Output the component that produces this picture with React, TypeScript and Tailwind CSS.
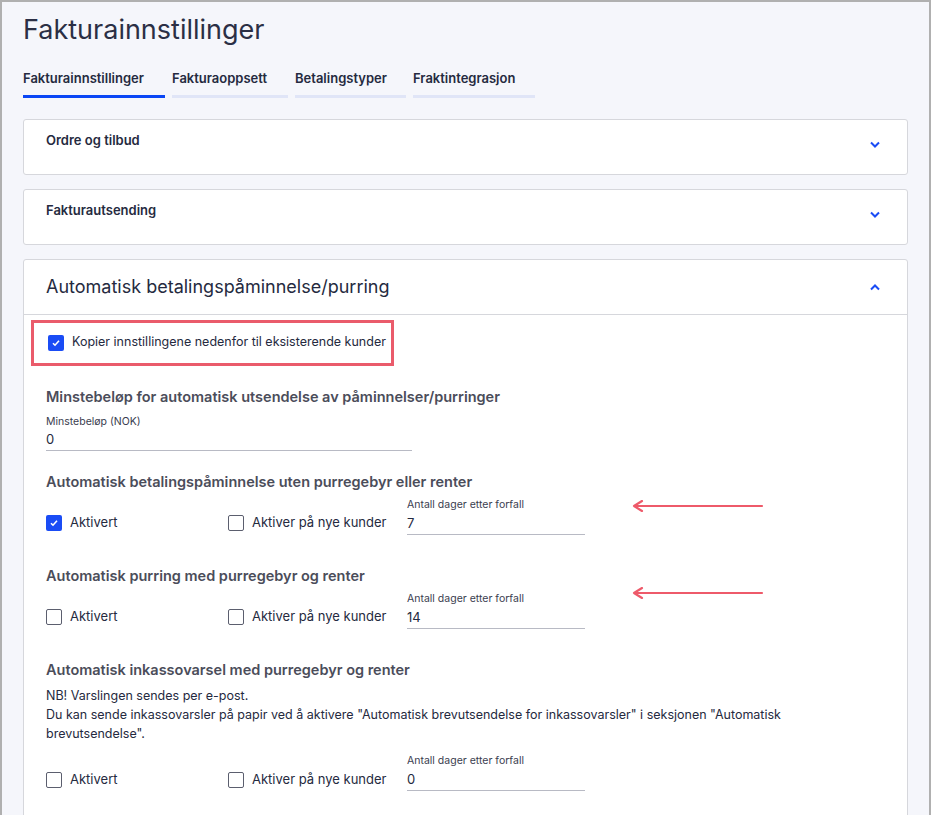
import React from "react";

const Check = ({ on }: { on?: boolean }) =>
  on ? (
    <span className="w-4 h-4 rounded-[2px] bg-[#1a4cf5] flex items-center justify-center shrink-0">
      <svg width="10" height="10" viewBox="0 0 10 10"><path d="M2 5.2l2 2 4-4.4" stroke="#fff" strokeWidth="1.6" fill="none" /></svg>
    </span>
  ) : (
    <span className="w-4 h-4 rounded-[2px] border border-[#5b5e6e] bg-white shrink-0" />
  );

const Chevron = ({ up }: { up?: boolean }) => (
  <svg width="12" height="8" viewBox="0 0 12 8" className="shrink-0">
    <path d={up ? "M2 6.5l4-4 4 4" : "M2 1.5l4 4 4-4"} stroke="#1a4cf5" strokeWidth="2" fill="none" />
  </svg>
);

const Row = ({ first, value }: { first?: boolean; value: string }) => (
  <div className="flex items-end h-[36px]">
    <div className="w-[182px] flex items-center gap-2 pb-[2px]"><Check on={first} /><span className="text-[13px]">Aktivert</span></div>
    <div className="w-[179px] flex items-center gap-2 pb-[2px]"><Check /><span className="text-[13px]">Aktiver på nye kunder</span></div>
    <div className="w-[178px]">
      <div className="text-[10.5px] text-[#3a3d4f] leading-[14px]">Antall dager etter forfall</div>
      <div className="text-[13px] border-b border-[#b8bac4] pb-[2px] pt-[2px] leading-[18px]">{value}</div>
    </div>
  </div>
);

const Arrow = ({ top }: { top: number }) => (
  <svg className="absolute" style={{ left: 630, top }} width="132" height="12" viewBox="0 0 132 12">
    <path d="M2 6h128M2 6l8-5M2 6l8 5" stroke="#ee5a6a" strokeWidth="2.2" fill="none" strokeLinecap="round" />
  </svg>
);

export default function App() {
  const H = "text-[14.5px] font-semibold text-[#4b4d5a]";
  const tabs: [string, string][] = [
    ["Fakturainnstillinger", "w-[142px] border-[#0a46f5]"],
    ["Fakturaoppsett", "w-[116px] border-[#e0e5f7]"],
    ["Betalingstyper", "w-[111px] border-[#e0e5f7]"],
    ["Fraktintegrasjon", "w-[122px] border-[#e0e5f7]"],
  ];
  return (
    <div className="relative w-[931px] h-[815px] bg-[#f5f6fb] border-x-2 border-t-2 border-[#b0b0b0] text-[#252a40] overflow-hidden" style={{ fontFamily: "Inter, 'Noto Sans', sans-serif" }}>
      <div className="px-[21px] pt-[12px]">
        <h1 className="text-[27px] leading-[32px] text-[#2b2f45]">Fakturainnstillinger</h1>
        <div className="flex gap-[7px] mt-[23px] text-[13px] font-semibold whitespace-nowrap">
          {tabs.map(([t, c]) => (
            <div key={t} className={`pb-[6px] border-b-[3px] ${c}`}>{t}</div>
          ))}
        </div>
        <div className="mt-[21px] flex flex-col gap-[14px] w-[885px]">
          {["Ordre og tilbud", "Fakturautsending"].map((t) => (
            <div key={t} className="bg-white border border-[#d6d7dc] rounded-[3px] h-[56px] flex justify-between items-start px-[22px] pt-[11px]">
              <span className="text-[13px] font-semibold">{t}</span>
              <span className="pt-[10px] pr-[4px]"><Chevron /></span>
            </div>
          ))}
          <div className="bg-white border border-[#d6d7dc] rounded-[3px]">
            <div className="h-[55px] flex items-center justify-between px-[22px] border-b border-[#d6d7dc]">
              <span className="text-[18px]">Automatisk betalingspåminnelse/purring</span>
              <span className="pr-[4px]"><Chevron up /></span>
            </div>
            <div className="px-[22px] pb-[28px]">
              <div className="mt-[5px] -ml-[15px] w-[363px] h-[46px] border-[3px] border-[#ea5b6b] flex items-center gap-[8px] pl-[14px] whitespace-nowrap">
                <Check on /><span className="text-[12.5px]">Kopier innstillingene nedenfor til eksisterende kunder</span>
              </div>
              <div className={`${H} mt-[20px]`}>Minstebeløp for automatisk utsendelse av påminnelser/purringer</div>
              <div className="text-[10.5px] mt-[7px] text-[#3a3d4f]">Minstebeløp (NOK)</div>
              <div className="w-[366px] border-b border-[#b8bac4] text-[13px] leading-[18px] pb-[2px]">0</div>
              <div className={`${H} mt-[20px]`}>Automatisk betalingspåminnelse uten purregebyr eller renter</div>
              <div className="mt-[6px]"><Row first value="7" /></div>
              <div className={`${H} mt-[30px]`}>Automatisk purring med purregebyr og renter</div>
              <div className="mt-[6px]"><Row value="14" /></div>
              <div className={`${H} mt-[30px]`}>Automatisk inkassovarsel med purregebyr og renter</div>
              <div className="text-[12.5px] leading-[19px] mt-[6px] max-w-[745px]">
                NB! Varslingen sendes per e-post.<br />
                Du kan sende inkassovarsler på papir ved å aktivere "Automatisk brevutsendelse for inkassovarsler" i seksjonen "Automatisk brevutsendelse".
              </div>
              <div className="mt-[12px]"><Row value="0" /></div>
            </div>
          </div>
        </div>
      </div>
      <Arrow top={498} />
      <Arrow top={585} />
    </div>
  );
}
